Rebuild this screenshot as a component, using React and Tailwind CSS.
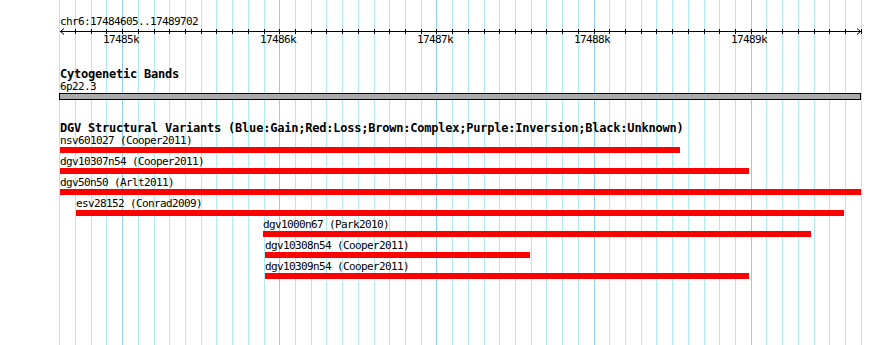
import React from "react";

const PX0 = 59.2;
const STEP = 15.717;
const lines = Array.from({ length: 52 }, (_, n) => ({
  x: Math.round(PX0 + n * STEP),
  major: n % 10 === 4,
}));

const majors = [
  { label: "17485k", x: 122 },
  { label: "17486k", x: 279 },
  { label: "17487k", x: 436 },
  { label: "17488k", x: 593 },
  { label: "17489k", x: 750 },
];

const variants = [
  { name: "nsv601027 (Cooper2011)", start: 60, end: 680 },
  { name: "dgv10307n54 (Cooper2011)", start: 60, end: 749 },
  { name: "dgv50n50 (Arlt2011)", start: 60, end: 861 },
  { name: "esv28152 (Conrad2009)", start: 76, end: 844 },
  { name: "dgv1000n67 (Park2010)", start: 263, end: 811 },
  { name: "dgv10308n54 (Cooper2011)", start: 265, end: 530 },
  { name: "dgv10309n54 (Cooper2011)", start: 265, end: 749 },
];

const small = "text-[11px] leading-[13px] tracking-[-0.62px] whitespace-nowrap";
const bold = "font-bold text-[12px] leading-[12px] tracking-[-0.22px] whitespace-nowrap";

function Grid() {
  return (
    <svg className="absolute inset-0 z-0" width="890" height="345">
      {lines.map((l, i) => (
        <line
          key={i}
          x1={l.x + 0.5}
          x2={l.x + 0.5}
          y1="0"
          y2="345"
          stroke={l.major ? "#8fd0ee" : "#aeecf0"}
          strokeWidth="1"
        />
      ))}
    </svg>
  );
}

function Ruler() {
  return (
    <div className="relative h-[20px]">
      <svg className="absolute left-0 top-0" width="890" height="8">
        <line x1="60" x2="861" y1="3.5" y2="3.5" stroke="#000" strokeWidth="1" />
        {lines.slice(1).map((l, i) => (
          <line key={i} x1={l.x + 0.5} x2={l.x + 0.5} y1="1" y2="6" stroke="#000" strokeWidth="1" />
        ))}
        <polyline points="64,0.5 60.5,3.5 64,6.5" fill="none" stroke="#000" strokeWidth="1" />
        <polyline points="857,0.5 860.5,3.5 857,6.5" fill="none" stroke="#000" strokeWidth="1" />
      </svg>
      {majors.map((m) => (
        <div
          key={m.label}
          className={`absolute top-[5px] text-black ${small}`}
          style={{ left: m.x - 19 }}
        >
          {m.label}
        </div>
      ))}
    </div>
  );
}

export default function App() {
  return (
    <div className="relative w-[890px] h-[345px] overflow-hidden bg-white text-black font-['DejaVu_Sans_Mono',monospace]">
      <Grid />
      <div className="relative z-10 flex flex-col">
        <div className={`mt-[15px] pl-[60px] ${small}`}>chr6:17484605..17489702</div>
        <Ruler />

        <div className={`mt-[20px] pl-[60px] ${bold}`}>Cytogenetic Bands</div>
        <div className={`pl-[60px] ${small}`}>6p22.3</div>
        <div className="ml-[59px] w-[802px] h-[7px] border border-black bg-[#aaaaaa]" />

        <div className={`mt-[22px] pl-[60px] ${bold}`}>
          DGV Structural Variants (Blue:Gain;Red:Loss;Brown:Complex;Purple:Inversion;Black:Unknown)
        </div>
        <div className="mt-[1px] flex flex-col gap-[3px]">
          {variants.map((v) => (
            <div key={v.name} className="flex flex-col">
              <div
                className="text-[11px] leading-[12px] tracking-[-0.62px] whitespace-nowrap"
                style={{ paddingLeft: v.start }}
              >
                {v.name}
              </div>
              <div
                className="h-[6px] bg-[#ff0000]"
                style={{ marginLeft: v.start, width: v.end - v.start }}
              />
            </div>
          ))}
        </div>
      </div>
    </div>
  );
}
